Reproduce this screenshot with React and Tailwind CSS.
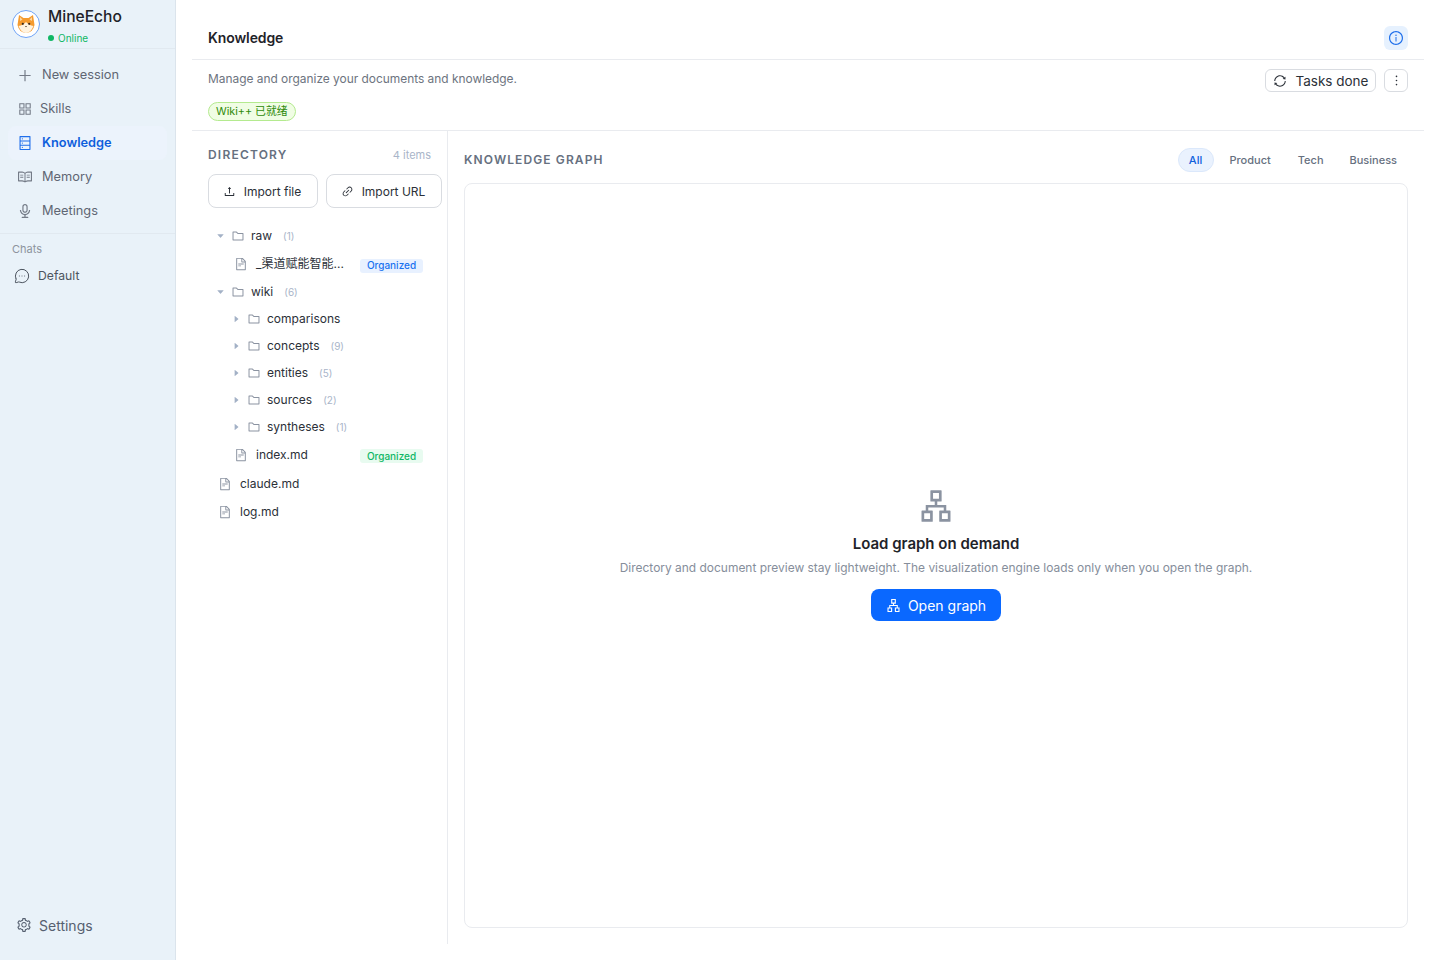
import React from "react";
import {
  AiOutlinePlus,
  AiOutlineAppstore,
  AiOutlineDatabase,
  AiOutlineRead,
  AiOutlineAudio,
  AiOutlineSetting,
  AiOutlineFolder,
  AiOutlineFileText,
  AiFillCaretDown,
  AiFillCaretRight,
  AiOutlineUpload,
  AiOutlineLink,
  AiOutlineSync,
  AiOutlineMore,
  AiOutlineApartment,
  AiOutlineInfoCircle,
} from "react-icons/ai";
import { MessageCircleMore } from "lucide-react";

const FONT = "font-['Inter','Noto_Sans_CJK_SC',sans-serif]";

function Logo() {
  return (
    <div className="w-[28px] h-[28px] rounded-full border border-[#6ea3f7] bg-white flex items-center justify-center shrink-0">
      <svg width="22" height="22" viewBox="0 0 22 22">
        <path d="M4 2 L8.500 5 H13.500 L18 2 L19.500 12 Q18 19.500 11 20 Q4 19.500 2.500 12 Z" fill="#f59b2f" />
        <path d="M5 4 L7.500 6.500 L5 8 Z M17 4 L14.500 6.500 L17 8 Z" fill="#fbd7a5" />
        <path d="M3.500 13 Q8 12.500 11 9 Q14 12.500 18.500 13 Q16 19.500 11 20 Q6 19.500 3.500 13 Z" fill="#fff3e0" />
        <circle cx="7.800" cy="10.800" r="1.100" fill="#3a2a20" />
        <circle cx="14.200" cy="10.800" r="1.100" fill="#3a2a20" />
        <path d="M10 13 H12 L11 14.200 Z" fill="#3a2a20" />
      </svg>
    </div>
  );
}

function NavItem({ icon: Icon, label, active, iconSize = 16, gap = "gap-[9px]", pl = "pl-[9px]" }) {
  return (
    <div
      className={`h-[34px] rounded-lg flex items-center ${pl} ${gap} text-[12.800px] ${
        active ? "bg-[#ecf3fc] text-[#0f5fdc] font-semibold" : "text-[#5f6673]"
      }`}
    >
      <span className="w-[16px] flex justify-center shrink-0">
        <Icon size={iconSize} className={active ? "text-[#1f6feb]" : "text-[#747b87]"} />
      </span>
      <span>{label}</span>
    </div>
  );
}

function Sidebar() {
  return (
    <aside className="w-[176px] h-screen shrink-0 bg-[#e9f2f9] border-r border-[#dbe4ec] flex flex-col">
      <div className="h-[49px] shrink-0 border-b border-[#e1e9f0] flex items-center pl-[12px] gap-[8px]">
        <Logo />
        <div className="self-start pt-[6px]">
          <div className="text-[15.600px] leading-[22px] font-medium text-[#1f2329]">MineEcho</div>
          <div className="flex items-center gap-[4px] text-[10px] leading-[14px] mt-[3px] text-[#10b765]">
            <span className="w-[6px] h-[6px] rounded-full bg-[#10b765]" />
            Online
          </div>
        </div>
      </div>
      <nav className="px-[8px] pt-[9px] pb-[5px] border-b border-[#e1e9f0]">
        <NavItem icon={AiOutlinePlus} label="New session" iconSize={17} />
        <NavItem icon={AiOutlineAppstore} label="Skills" gap="gap-[7px]" />
        <NavItem icon={AiOutlineDatabase} label="Knowledge" active />
        <NavItem icon={AiOutlineRead} label="Memory" />
        <NavItem icon={AiOutlineAudio} label="Meetings" />
      </nav>
      <div className="px-[12px] pt-[8px] text-[11px] leading-[14px] text-[#8d949e]">Chats</div>
      <div className="flex items-center pl-[14px] gap-[8px] h-[28px] mt-[6px] text-[12.200px] text-[#4d5560]">
        <MessageCircleMore size={16} strokeWidth={1.5} className="text-[#4d5560]" />
        Default
      </div>
      <div className="mt-auto mb-[21px] flex items-center pl-[16px] gap-[7px] h-[28px] text-[14px] text-[#566070]">
        <AiOutlineSetting size={16} />
        Settings
      </div>
    </aside>
  );
}

function Count({ n }) {
  return <span className="text-[10px] text-[#a9b5c9] pt-[2px]">({n})</span>;
}

function FolderRow({ name, count, open, indent }) {
  const Caret = open ? AiFillCaretDown : AiFillCaretRight;
  return (
    <div className={`h-[27px] flex items-center ${indent}`}>
      <Caret size={10} className="text-[#a3b1c6] w-[9px] shrink-0" />
      <AiOutlineFolder size={14} className="text-[#8b93a1] ml-[6px] shrink-0" />
      <span className="ml-[6px] mr-[11px] text-[12px] text-[#2b3038]">{name}</span>
      {count && <Count n={count} />}
    </div>
  );
}

function FileRow({ name, tag, tagClass, indent, h = "h-[28px]" }) {
  return (
    <div className={`${h} flex items-center ${indent}`}>
      <AiOutlineFileText size={14} className="text-[#8b93a1] shrink-0" />
      <span className="ml-[8px] text-[12px] text-[#2b3038] w-[96px] whitespace-nowrap shrink-0">{name}</span>
      {tag && (
        <span className={`ml-[8px] mt-[3px] h-[14px] w-[63px] rounded-[3px] flex items-center justify-center text-[10px] font-medium ${tagClass}`}>
          {tag}
        </span>
      )}
    </div>
  );
}

function Directory() {
  return (
    <div className="w-[256px] shrink-0 border-r border-[#e9ebef] pl-[16px] pt-[17px]">
      <div className="flex items-center justify-between pr-[16px] h-[14px]">
        <span className="text-[12px] font-semibold tracking-[1.2px] text-[#667080]">DIRECTORY</span>
        <span className="text-[11px] text-[#a9b5c9]">4 items</span>
      </div>
      <div className="flex gap-[8px] mt-[12px]">
        <button className="w-[110px] h-[34px] pt-[1px] pr-[2px] rounded-lg border border-[#d9dce1] flex items-center justify-center gap-[8px] text-[12px] text-[#2b3038]">
          <AiOutlineUpload size={13} /> Import file
        </button>
        <button className="w-[116px] h-[34px] pt-[1px] pr-[2px] rounded-lg border border-[#d9dce1] flex items-center justify-center gap-[8px] text-[12px] text-[#2b3038]">
          <AiOutlineLink size={13} /> Import URL
        </button>
      </div>
      <div className="mt-[14px]">
        <FolderRow name="raw" count="1" open indent="pl-[8px]" />
        <FileRow
          name="_渠道赋能智能..."
          tag="Organized"
          tagClass="bg-[#e8f1ff] text-[#1a73f0]"
          indent="pl-[26px]"
          h="h-[29px] pt-[1px]"
        />
        <FolderRow name="wiki" count="6" open indent="pl-[8px]" />
        <FolderRow name="comparisons" indent="pl-[24px]" />
        <FolderRow name="concepts" count="9" indent="pl-[24px]" />
        <FolderRow name="entities" count="5" indent="pl-[24px]" />
        <FolderRow name="sources" count="2" indent="pl-[24px]" />
        <FolderRow name="syntheses" count="1" indent="pl-[24px]" />
        <FileRow name="index.md" tag="Organized" tagClass="bg-[#e8fbf0] text-[#10b765]" indent="pl-[26px]" h="h-[29px]" />
        <FileRow name="claude.md" indent="pl-[10px]" h="h-[29px] pt-[1px]" />
        <FileRow name="log.md" indent="pl-[10px]" />
      </div>
    </div>
  );
}

function GraphPanel() {
  return (
    <div className="flex-1 pl-[16px] flex flex-col min-w-0">
      <div className="h-[52px] shrink-0 flex items-center justify-between pr-[16px] pt-[5px]">
        <span className="text-[12px] font-semibold tracking-[1.100px] text-[#667080]">KNOWLEDGE GRAPH</span>
        <div className="flex items-center text-[11px] font-medium text-[#667080]">
          <span className="w-[36px] h-[24px] pt-[1px] rounded-full bg-[#eaf2fe] border border-[#dbe8fb] text-[#0f5fdc] flex items-center justify-center">
            All
          </span>
          <span className="ml-[16px] pt-[1px]">Product</span>
          <span className="ml-[27px] pt-[1px]">Tech</span>
          <span className="ml-[26px] mr-[11px] pt-[1px]">Business</span>
        </div>
      </div>
      <div className="mr-[16px] h-[745px] rounded-lg border border-[#e9ebef] flex flex-col items-center justify-center pb-[2px]">
        <AiOutlineApartment size={36} className="text-[#8b93a1] -mt-[1px]" />
        <div className="mt-[9px] text-[15px] leading-[22px] font-semibold text-[#1f2329]">Load graph on demand</div>
        <div className="mt-[4px] text-[11.960px] leading-[18px] text-[#868e9b]">
          Directory and document preview stay lightweight. The visualization engine loads only when you open the graph.
        </div>
        <button className="mt-[12px] w-[130px] h-[32px] pt-[1px] rounded-lg bg-[#0a68ff] text-white text-[14px] flex items-center justify-center gap-[7px]">
          <AiOutlineApartment size={15} /> Open graph
        </button>
      </div>
    </div>
  );
}

export default function App() {
  return (
    <div className={`h-screen flex bg-white overflow-hidden ${FONT}`}>
      <Sidebar />
      <main className="flex-1 px-[16px] min-w-0">
        <div className="h-[60px] border-b border-[#e9ebef] flex items-center justify-between pl-[16px] pt-[16px]">
          <h1 className="text-[14px] tracking-[-0.100px] font-semibold text-[#1f2329]">Knowledge</h1>
          <span className="w-[24px] h-[24px] mr-[16px] rounded-md bg-[#e6f1fe] flex items-center justify-center">
            <AiOutlineInfoCircle size={16} className="text-[#1f6feb]" />
          </span>
        </div>
        <div className="h-[71px] border-b border-[#e9ebef] px-[16px] flex justify-between">
          <div>
            <p className="mt-[11px] text-[11.950px] leading-[16px] tracking-[-0.020px] text-[#6d7480]">
              Manage and organize your documents and knowledge.
            </p>
            <span className="mt-[15px] pt-[1px] inline-flex items-center h-[19px] px-[7px] rounded-full bg-[#f0fde4] border border-[#b4ea8f] text-[10.800px] text-[#2f8a0a]">
              Wiki++ 已就绪
            </span>
          </div>
          <div className="flex gap-[8px] mt-[9px] items-start">
            <button className="h-[23px] w-[111px] pt-[1px] rounded-md border border-[#d9dce1] flex items-center justify-center gap-[9px] text-[13.500px] text-[#2b3038]">
              <AiOutlineSync size={14} className="-mt-[1px]" /> Tasks done
            </button>
            <button className="h-[23px] w-[24px] rounded-md border border-[#d9dce1] flex items-center justify-center text-[#2b3038]">
              <AiOutlineMore size={15} />
            </button>
          </div>
        </div>
        <div className="flex h-[813px]">
          <Directory />
          <GraphPanel />
        </div>
      </main>
    </div>
  );
}
